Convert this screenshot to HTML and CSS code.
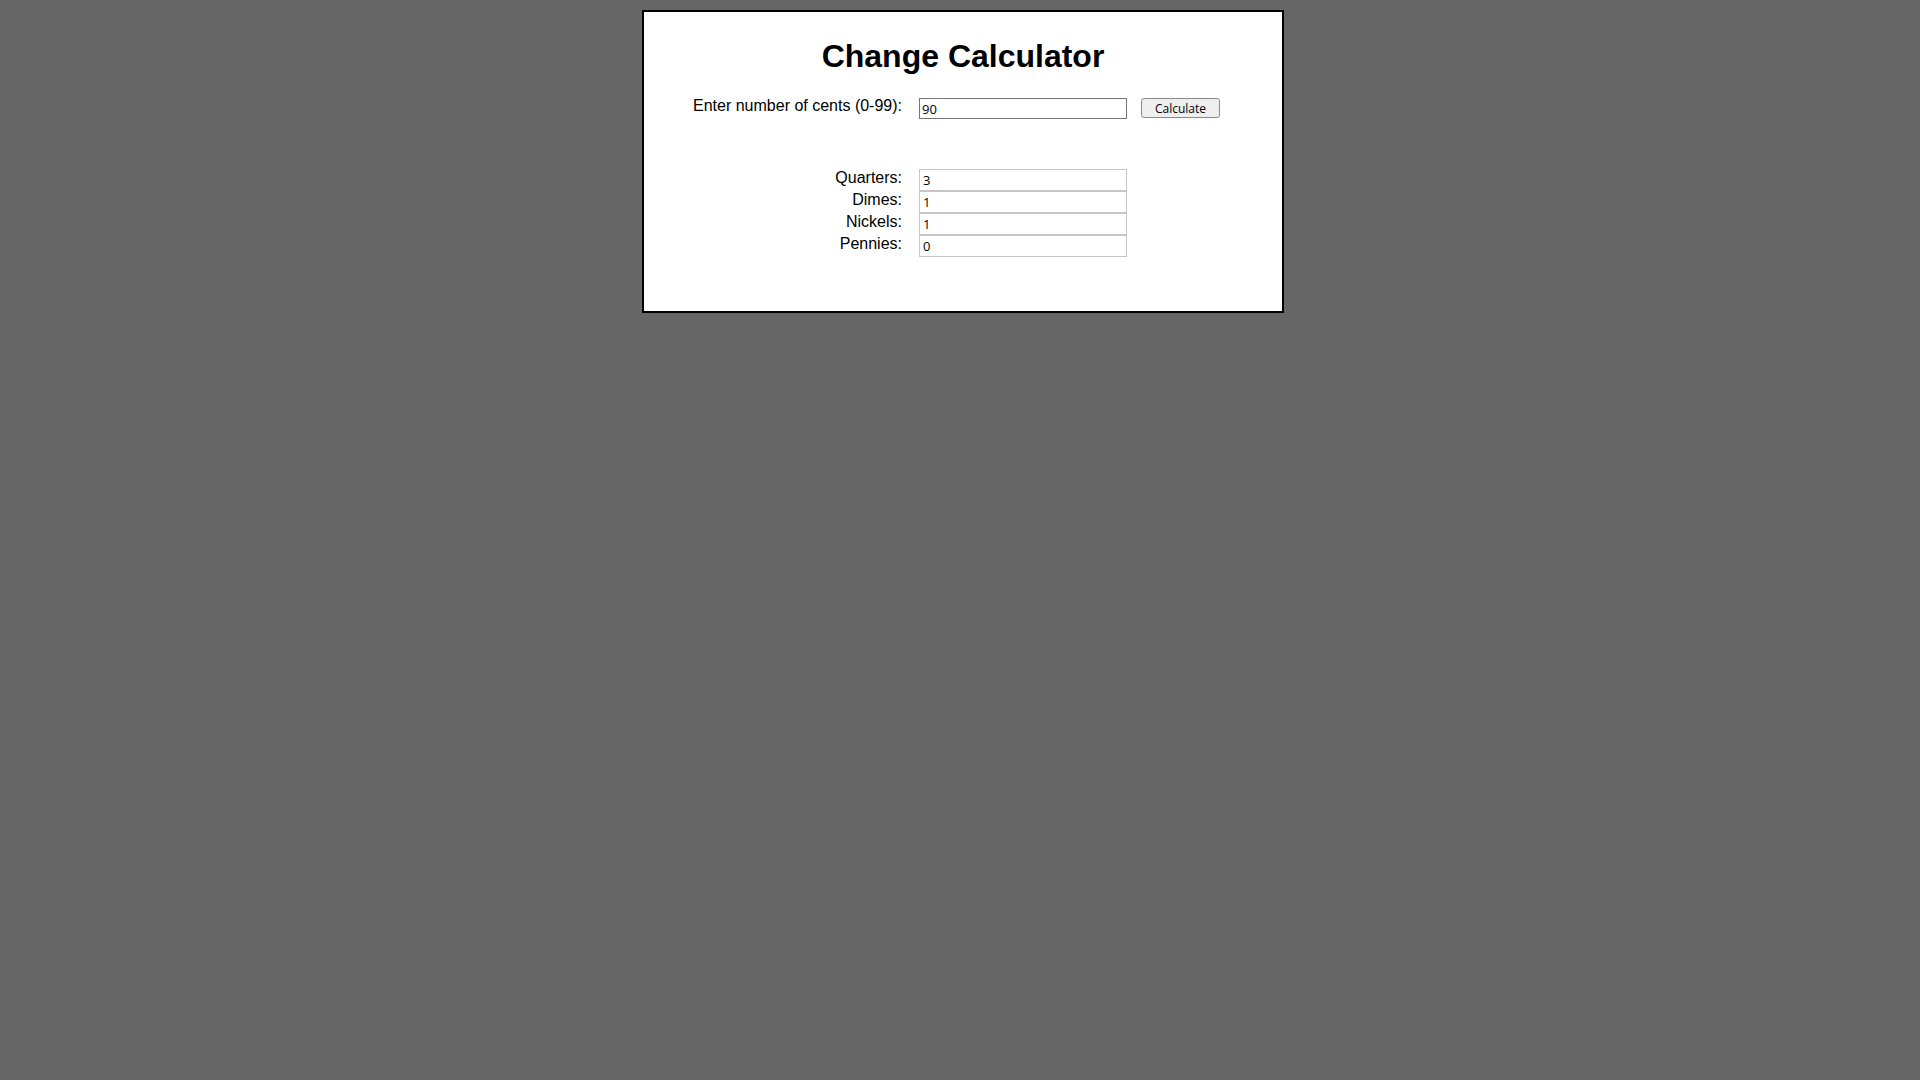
FILE: index.html
```html
<!DOCTYPE html>
<html lang="en">
<head>
<meta charset="utf-8">
<title>Change Calculator</title>
<link rel="stylesheet" href="styles.css">
</head>
<body>
<main class="box">
  <h1 class="title">Change Calculator</h1>
  <div class="entry">
    <label class="label" for="cents">Enter number of cents (0-99):</label>
    <input class="field field-entry" id="cents" type="text" value="90">
    <button class="btn" type="button">Calculate</button>
  </div>
  <div class="results">
    <label class="label" for="quarters">Quarters:</label>
    <input class="field field-out" id="quarters" type="text" value="3" readonly>
    <label class="label" for="dimes">Dimes:</label>
    <input class="field field-out" id="dimes" type="text" value="1" readonly>
    <label class="label" for="nickels">Nickels:</label>
    <input class="field field-out" id="nickels" type="text" value="1" readonly>
    <label class="label" for="pennies">Pennies:</label>
    <input class="field field-out" id="pennies" type="text" value="0" readonly>
  </div>
</main>
</body>
</html>
```

FILE: styles.css
```css
html, body {
  margin: 0;
  background: #666666;
}

body {
  padding-top: 10px;
  font-family: "Liberation Sans", Arial, sans-serif;
  color: #000;
}

.box {
  width: 638px;
  margin-left: calc(50% - 318px);
  border: 2px solid #000;
  background: #fff;
  padding: 26px 0 54px;
}

.title {
  margin: 0;
  font-size: 32px;
  font-weight: bold;
  line-height: 37px;
  text-align: center;
}

.entry {
  display: flex;
  align-items: flex-start;
  margin-top: 22px;
}

.label {
  font-size: 16px;
  line-height: 18px;
  text-align: right;
}

.entry .label {
  width: 258px;
  margin-right: 17px;
}

.field {
  box-sizing: border-box;
  width: 208px;
  margin: 0;
  font-family: "Open Sans", "Noto Sans", sans-serif;
  font-size: 13px;
  color: #000;
  background: #fff;
  outline: none;
}

.field-entry {
  height: 21px;
  margin-top: 1px;
  padding: 0 2px;
  border: 1px solid #767676;
}

.btn {
  box-sizing: border-box;
  width: 79px;
  height: 20px;
  margin: 1px 0 0 14px;
  padding: 0;
  border: 1px solid #8a8a8a;
  border-radius: 3px;
  background: #efefef;
  font-family: "Open Sans", "Noto Sans", sans-serif;
  font-size: 12px;
  color: #000;
}

.results {
  display: grid;
  grid-template-columns: 258px 208px;
  column-gap: 17px;
  margin-top: 50px;
}

.field-out {
  height: 22px;
  padding: 0 3px;
  border: 1px solid #c6c6c6;
}
```
